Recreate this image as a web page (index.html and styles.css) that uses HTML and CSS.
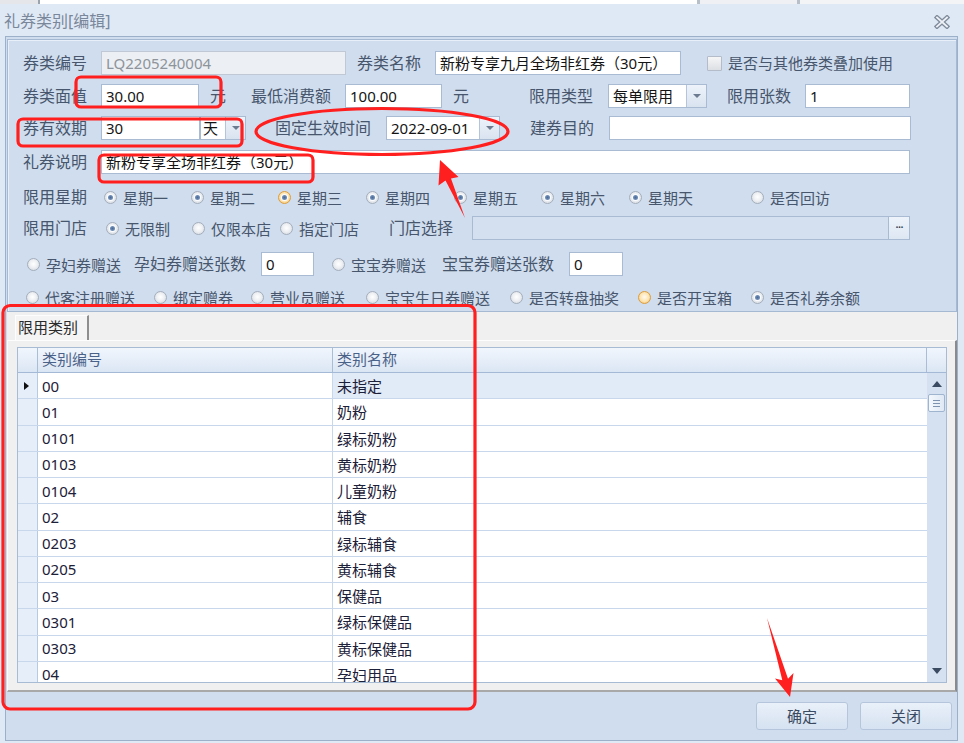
FILE: index.html
```html
<!DOCTYPE html>
<html lang="zh-CN">
<head>
<meta charset="utf-8">
<title>礼券类别[编辑]</title>
<link rel="stylesheet" href="styles.css">
</head>
<body>
<div class="topstrip"><span class="ts ts-a"></span><span class="ts ts-b"></span><span class="ts ts-c"></span><span class="ts ts-d"></span></div>
<div class="titlebar">
  <span class="title">礼券类别[编辑]</span>
  <svg class="close" width="16" height="14" viewBox="0 0 16 14"><path d="M3 2.5 L13 11.5 M13 2.5 L3 11.5" stroke="#7f8b9b" stroke-width="4.4" stroke-linecap="square" fill="none"/><path d="M3 2.5 L13 11.5 M13 2.5 L3 11.5" stroke="#eef2f7" stroke-width="1.8" stroke-linecap="square" fill="none"/></svg>
</div>
<div class="frame">
  <div class="group">
    <div class="row r1">
      <span class="lbl w78">券类编号</span>
      <span class="inp dis w245">LQ2205240004</span>
      <span class="lbl ml11 w78">券类名称</span>
      <span class="inp w246">新粉专享九月全场非红券（30元）</span>
      <span class="chk ml26"></span>
      <span class="ctxt">是否与其他券类叠加使用</span>
    </div>
    <div class="row r2">
      <span class="lbl w78">券类面值</span>
      <span class="inp w98">30.00</span>
      <span class="lbl ml11 w41">元</span>
      <span class="lbl w94">最低消费额</span>
      <span class="inp w97">100.00</span>
      <span class="lbl ml11 w76">元</span>
      <span class="lbl w79">限用类型</span>
      <span class="combo w99"><span class="ctext">每单限用</span><span class="cbtn"><b></b></span></span>
      <span class="lbl ml20 w78">限用张数</span>
      <span class="inp w105">1</span>
    </div>
    <div class="row r3">
      <span class="lbl w78">券有效期</span>
      <span class="inp w99">30</span>
      <span class="combo w46"><span class="ctext tight">天</span><span class="cbtn"><b></b></span></span>
      <span class="lbl ml29 w111">固定生效时间</span>
      <span class="combo w114"><span class="ctext">2022-09-01</span><span class="cbtn"><b></b></span></span>
      <span class="lbl ml30 w79">建券目的</span>
      <span class="inp w302"></span>
    </div>
    <div class="row r4">
      <span class="lbl w78">礼券说明</span>
      <span class="inp w809">新粉专享全场非红券（30元）</span>
    </div>
    <div class="row r5">
      <span class="lbl w81">限用星期</span>
      <span class="rad on w87"><i></i>星期一</span>
      <span class="rad on w87"><i></i>星期二</span>
      <span class="rad on hot w88"><i></i>星期三</span>
      <span class="rad on w88"><i></i>星期四</span>
      <span class="rad on w87"><i></i>星期五</span>
      <span class="rad on w88"><i></i>星期六</span>
      <span class="rad on w122"><i></i>星期天</span>
      <span class="rad"><i></i>是否回访</span>
    </div>
    <div class="row r6">
      <span class="lbl w83">限用门店</span>
      <span class="rad on w86"><i></i>无限制</span>
      <span class="rad w88"><i></i>仅限本店</span>
      <span class="rad w109"><i></i>指定门店</span>
      <span class="lbl w83">门店选择</span>
      <span class="inp store w438"><span class="dots">···</span></span>
    </div>
    <div class="row r7">
      <span class="rad ml4 w107"><i></i>孕妇券赠送</span>
      <span class="lbl w127">孕妇券赠送张数</span>
      <span class="inp w53">0</span>
      <span class="rad ml18 w110"><i></i>宝宝券赠送</span>
      <span class="lbl w127">宝宝券赠送张数</span>
      <span class="inp w54">0</span>
    </div>
    <div class="row r8">
      <span class="rad ml3 w128"><i></i>代客注册赠送</span>
      <span class="rad w97"><i></i>绑定赠券</span>
      <span class="rad w115"><i></i>营业员赠送</span>
      <span class="rad w144"><i></i>宝宝生日券赠送</span>
      <span class="rad w128"><i></i>是否转盘抽奖</span>
      <span class="rad hot w113"><i></i>是否开宝箱</span>
      <span class="rad on"><i></i>是否礼券余额</span>
    </div>
  </div>
  <div class="tabs">
    <div class="tabstrip"><span class="tab">限用类别</span></div>
    <div class="page">
      <div class="grid">
        <div class="ghead">
          <span class="hc hind"></span>
          <span class="hc hc1">类别编号</span>
          <span class="hc hc2">类别名称</span>
          <span class="hc hcorner"></span>
        </div>
        <div class="gbody">
          <div class="grows">
            <div class="grow cur"><span class="ind"><b></b></span><span class="c1">00</span><span class="c2">未指定</span></div>
            <div class="grow"><span class="ind"></span><span class="c1">01</span><span class="c2">奶粉</span></div>
            <div class="grow"><span class="ind"></span><span class="c1">0101</span><span class="c2">绿标奶粉</span></div>
            <div class="grow"><span class="ind"></span><span class="c1">0103</span><span class="c2">黄标奶粉</span></div>
            <div class="grow"><span class="ind"></span><span class="c1">0104</span><span class="c2">儿童奶粉</span></div>
            <div class="grow"><span class="ind"></span><span class="c1">02</span><span class="c2">辅食</span></div>
            <div class="grow"><span class="ind"></span><span class="c1">0203</span><span class="c2">绿标辅食</span></div>
            <div class="grow"><span class="ind"></span><span class="c1">0205</span><span class="c2">黄标辅食</span></div>
            <div class="grow"><span class="ind"></span><span class="c1">03</span><span class="c2">保健品</span></div>
            <div class="grow"><span class="ind"></span><span class="c1">0301</span><span class="c2">绿标保健品</span></div>
            <div class="grow"><span class="ind"></span><span class="c1">0303</span><span class="c2">黄标保健品</span></div>
            <div class="grow"><span class="ind"></span><span class="c1">04</span><span class="c2">孕妇用品</span></div>
          </div>
          <div class="vscroll">
            <span class="arrow up"></span>
            <span class="thumb"><i></i><i></i><i></i></span>
            <span class="spacer"></span>
            <span class="arrow down"></span>
          </div>
        </div>
      </div>
    </div>
  </div>
  <div class="btnbar">
    <span class="btn">确定</span>
    <span class="btn">关闭</span>
  </div>
</div>
<svg class="annot" width="964" height="743" viewBox="0 0 964 743">
  <g fill="none" stroke="#ff1f1f" stroke-width="3.2">
    <rect x="76" y="77" width="145" height="30" rx="5"/>
    <rect x="18" y="119" width="224" height="27" rx="5"/>
    <rect x="99" y="155" width="214" height="27" rx="5"/>
    <ellipse cx="382" cy="131.5" rx="126" ry="23"/>
    <rect x="3" y="305.5" width="472" height="403.5" rx="7"/>
  </g>
  <g fill="#ff1f1f">
    <polygon points="440,160 458.5,177 451,178.5 465,218 445.5,180.5 438.5,185.5"/>
    <polygon points="790,697 775,678.5 782.3,680.2 767,618 788,678.7 793.5,673"/>
  </g>
</svg>
</body>
</html>
```

FILE: styles.css
```css
html, body {
  margin: 0;
  padding: 0;
}
body {
  width: 964px;
  height: 743px;
  overflow: hidden;
  position: relative;
  background: #dfe9f5;
  font-family: "Noto Sans", "Noto Sans CJK SC", sans-serif;
  font-size: 15px;
  color: #465468;
}

/* strip of the window behind */
.topstrip {
  height: 4px;
  display: flex;
  border-bottom: 0;
}
.ts { display: block; height: 4px; }
.ts-a { width: 38px; background: #e4e6ea; border-right: 2px solid #9aa3ae; }
.ts-b { width: 657px; background: #ffffff; border-right: 3px solid #b7bfc9; }
.ts-c { width: 97px; background: #eef0f3; border-right: 3px solid #b7bfc9; }
.ts-d { flex: 1; background: #f3f4f6; }

.titlebar {
  height: 32px;
  display: flex;
  align-items: center;
  justify-content: space-between;
  padding: 0 14px 0 4px;
}
.title {
  font-size: 16px;
  color: #7a879a;
  line-height: 20px;
  margin-top: 1px;
}
.close { display: block; margin-top: 4px; }

.frame {
  margin-left: 5px;
  width: 953px;
  height: 705px;
  box-sizing: border-box;
  border: 1px solid #9cb0c9;
  background: #d0ddee;
  padding: 2px 0 0 1px;
  display: flex;
  flex-direction: column;
}

.group {
  width: 950px;
  height: 273px;
  box-sizing: border-box;
  border: 1px solid #a6b9d2;
  box-shadow: inset 1px 1px 0 #e8eff8;
  padding: 11px 0 0 15px;
  flex-shrink: 0;
}
.row {
  display: flex;
  align-items: center;
  height: 24px;
}
.r2 { margin-top: 9px; }
.r3 { margin-top: 8px; }
.r4 { margin-top: 10px; }
.r5 { margin-top: 11px; }
.r6 { margin-top: 7px; }
.r7 { margin-top: 12px; }
.r8 { margin-top: 9px; }

.lbl {
  display: block;
  flex-shrink: 0;
  font-size: 16px;
  line-height: 24px;
  white-space: nowrap;
  color: #47566c;
}
.ctxt {
  display: block;
  margin-left: 6px;
  font-size: 15px;
  line-height: 24px;
  white-space: nowrap;
  color: #47566c;
}

.inp {
  display: block;
  flex-shrink: 0;
  height: 24px;
  box-sizing: border-box;
  border: 1px solid #a9bbd3;
  background: #ffffff;
  color: #141414;
  padding: 0 4px;
  font-size: 15px;
  line-height: 22px;
  white-space: nowrap;
  overflow: hidden;
}
.inp.dis {
  background: #eceff3;
  border-color: #bfc8d4;
  color: #8e949c;
}
.inp.store {
  background: #d4e0ef;
  display: flex;
  justify-content: flex-end;
  padding: 0;
}
.dots {
  display: block;
  width: 20px;
  height: 22px;
  border-left: 1px solid #a9bbd3;
  background: linear-gradient(#eef3fa, #dde7f3);
  color: #2c3a4e;
  font-size: 13px;
  line-height: 20px;
  text-align: center;
  letter-spacing: -1px;
}

.combo {
  display: flex;
  flex-shrink: 0;
  height: 24px;
  box-sizing: border-box;
  border: 1px solid #a9bbd3;
  background: #ffffff;
}
.ctext {
  flex: 1;
  padding: 0 4px;
  color: #141414;
  font-size: 15px;
  line-height: 22px;
  white-space: nowrap;
  overflow: hidden;
}
.ctext.tight { padding: 0 2px; }
.cbtn {
  width: 19px;
  flex-shrink: 0;
  border-left: 1px solid #b4c5db;
  background: linear-gradient(#eef3fa, #d9e3f0);
  display: flex;
  align-items: center;
  justify-content: center;
}
.cbtn b {
  display: block;
  width: 0;
  height: 0;
  border-left: 4px solid transparent;
  border-right: 4px solid transparent;
  border-top: 4px solid #6c7b90;
}

.chk {
  display: block;
  flex-shrink: 0;
  width: 15px;
  height: 15px;
  box-sizing: border-box;
  border: 1px solid #b3bcc8;
  border-radius: 1px;
  background: linear-gradient(#f6f6f7, #dcdfe3);
}

.rad {
  display: flex;
  align-items: center;
  flex-shrink: 0;
  height: 24px;
  font-size: 15px;
  white-space: nowrap;
  color: #47566c;
}
.rad i {
  display: block;
  position: relative;
  width: 13px;
  height: 13px;
  box-sizing: border-box;
  border-radius: 50%;
  border: 1px solid #a4aebb;
  background: radial-gradient(circle at 50% 45%, #ffffff 0, #eef0f3 45%, #cdd4dc 100%);
  margin-right: 6px;
  flex-shrink: 0;
}
.rad.on i::after {
  content: "";
  position: absolute;
  left: 3px;
  top: 3px;
  width: 5px;
  height: 5px;
  border-radius: 50%;
  background: radial-gradient(circle, #4a6a98 0, #86a3c9 100%);
  box-shadow: 0 0 0 1px #fafcff;
}
.rad.hot i {
  border-color: #dd9d3c;
  background: radial-gradient(circle at 50% 45%, #fffaf0 0, #fde4b0 55%, #f0b45a 100%);
}

.ml3 { margin-left: 3px; }
.ml4 { margin-left: 4px; }
.ml11 { margin-left: 11px; }
.ml18 { margin-left: 18px; }
.ml20 { margin-left: 20px; }
.ml26 { margin-left: 26px; }
.ml29 { margin-left: 29px; }
.ml30 { margin-left: 30px; }
.w41 { width: 41px; }
.w45 { width: 45px; }
.w46 { width: 46px; }
.w53 { width: 53px; }
.w54 { width: 54px; }
.w76 { width: 76px; }
.w78 { width: 78px; }
.w79 { width: 79px; }
.w81 { width: 81px; }
.w83 { width: 83px; }
.w86 { width: 86px; }
.w87 { width: 87px; }
.w88 { width: 88px; }
.w94 { width: 94px; }
.w97 { width: 97px; }
.w98 { width: 98px; }
.w99 { width: 99px; }
.w105 { width: 105px; }
.w107 { width: 107px; }
.w109 { width: 109px; }
.w110 { width: 110px; }
.w111 { width: 111px; }
.w113 { width: 113px; }
.w114 { width: 114px; }
.w115 { width: 115px; }
.w122 { width: 122px; }
.w127 { width: 127px; }
.w128 { width: 128px; }
.w144 { width: 144px; }
.w245 { width: 245px; }
.w246 { width: 246px; }
.w302 { width: 302px; }
.w438 { width: 438px; }
.w809 { width: 809px; }

/* tab control */
.tabs {
  width: 950px;
  height: 380px;
  flex-shrink: 0;
  display: flex;
  flex-direction: column;
  background: #f0f0f0;
}
.tabstrip {
  height: 28px;
  box-sizing: border-box;
  padding: 3px 0 0 8px;
  display: flex;
}
.tab {
  display: block;
  height: 25px;
  box-sizing: border-box;
  padding: 0 9px 0 2px;
  border-left: 1px solid #fdfdfd;
  border-top: 1px solid #fdfdfd;
  border-right: 2px solid #8e8e8e;
  background: #f4f4f4;
  color: #2a2a2a;
  font-size: 15px;
  line-height: 23px;
}
.page {
  flex: 1;
  box-sizing: border-box;
  border-top: 1px solid #fdfdfd;
  border-left: 1px solid #fdfdfd;
  border-right: 2px solid #8a8a8a;
  border-bottom: 2px solid #a8a8a8;
  background: #f0f0f0;
  padding: 6px 0 0 9px;
}

/* grid */
.grid {
  width: 930px;
  height: 336px;
  box-sizing: border-box;
  border: 1px solid #a7bbd5;
  background: #ffffff;
  display: flex;
  flex-direction: column;
  overflow: hidden;
}
.ghead {
  height: 25px;
  display: flex;
  flex-shrink: 0;
  box-sizing: border-box;
  border-bottom: 1px solid #a4b9d5;
  background: linear-gradient(#f1f6fd, #dbe6f4);
}
.hc {
  display: block;
  box-sizing: border-box;
  border-right: 1px solid #a9bdd7;
  color: #4b6288;
  font-size: 15px;
  line-height: 23px;
  padding-left: 4px;
  white-space: nowrap;
}
.hind { width: 20px; }
.hc1 { width: 295px; }
.hc2 { width: 594px; }
.hcorner { width: 19px; border-right: 0; }

.gbody {
  flex: 1;
  display: flex;
  overflow: hidden;
}
.grows {
  width: 909px;
  overflow: hidden;
}
.grow {
  display: flex;
  height: 26.25px;
  box-sizing: border-box;
  border-bottom: 1px solid #c8d7ec;
}
.grow span {
  display: flex;
  align-items: center;
  box-sizing: border-box;
  border-right: 1px solid #c8d7ec;
  color: #1c2038;
  font-size: 15px;
  white-space: nowrap;
}
.grow .ind {
  width: 20px;
  background: #e6eef9;
  border-right-color: #b8cae2;
  justify-content: center;
}
.grow .ind b {
  display: block;
  width: 0;
  height: 0;
  border-left: 5px solid #111;
  border-top: 4px solid transparent;
  border-bottom: 4px solid transparent;
  margin-left: -2px;
}
.grow .c1 { width: 295px; padding-left: 4px; }
.grow .c2 { width: 594px; padding-left: 4px; border-right: 0; }
.grow.cur .c2 { background: #e1eaf7; }

.vscroll {
  width: 19px;
  flex-shrink: 0;
  background: #d5e1f0;
  display: flex;
  flex-direction: column;
  align-items: center;
}
.arrow {
  display: block;
  width: 0;
  height: 0;
  border-left: 5px solid transparent;
  border-right: 5px solid transparent;
}
.arrow.up {
  border-bottom: 6px solid #3b4b61;
  margin-top: 8px;
}
.arrow.down {
  border-top: 6px solid #3b4b61;
  margin-bottom: 8px;
}
.thumb {
  display: flex;
  flex-direction: column;
  align-items: center;
  justify-content: center;
  gap: 2px;
  width: 17px;
  height: 18px;
  box-sizing: border-box;
  margin-top: 7px;
  border: 1px solid #9fb4cf;
  border-radius: 2px;
  background: linear-gradient(90deg, #f4f8fd, #dfe8f4);
}
.thumb i {
  display: block;
  width: 7px;
  height: 1px;
  background: #7e93b0;
}
.spacer { flex: 1; }

/* buttons */
.btnbar {
  flex: 1;
  display: flex;
  justify-content: flex-end;
  align-items: flex-start;
  gap: 12px;
  padding: 10px 5px 0 0;
}
.btn {
  display: block;
  width: 92px;
  height: 28px;
  box-sizing: border-box;
  border: 1px solid #b5c6dc;
  border-radius: 3px;
  background: linear-gradient(#e9f0f9, #d6e2f1);
  color: #3a4a60;
  font-size: 15px;
  line-height: 26px;
  text-align: center;
}

.annot {
  position: absolute;
  left: 0;
  top: 0;
  pointer-events: none;
}
```
